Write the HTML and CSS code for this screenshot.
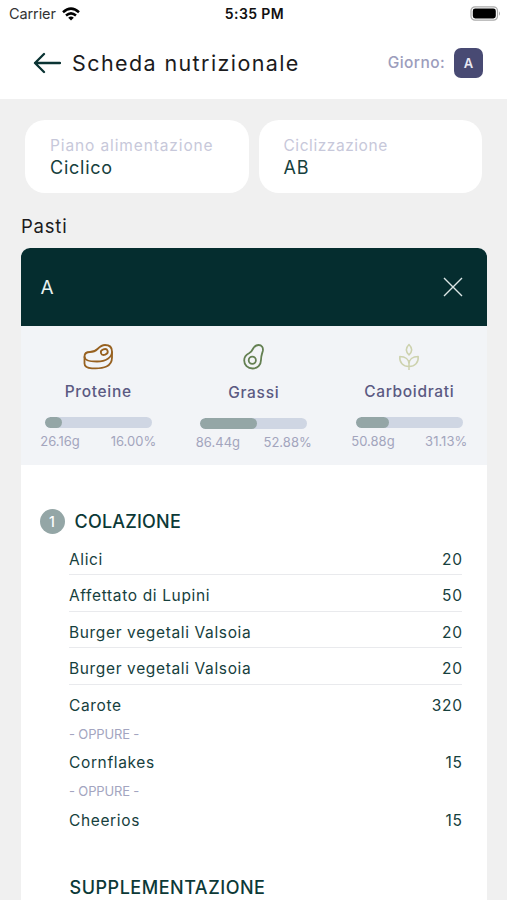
FILE: index.html
```html
<!DOCTYPE html>
<html lang="it">
<head>
<meta charset="utf-8">
<title>Scheda nutrizionale</title>
<link rel="stylesheet" href="styles.css">
</head>
<body>
<header class="top">
  <div class="status">
    <div class="carrier"><span>Carrier</span>
      <svg class="wifi" width="18" height="14" viewBox="0 0 18 14" fill="none" stroke="#000" stroke-width="2.5"><path d="M1 5.2Q9 -2 17 5.2M4 8.5Q9 4.2 14 8.5"/><path d="M6.2 10.7Q9 8.5 11.8 10.7L9 13.5Z" fill="#000" stroke="none"/></svg>
    </div>
    <span class="clock">5:35 PM</span>
    <svg class="battery" width="31" height="15" viewBox="0 0 31 15"><rect x="1" y=".8" width="26.5" height="13.4" rx="4" fill="#fff" stroke="#aaa" stroke-width="1.2"/><rect x="2.8" y="2.6" width="23" height="9.8" rx="2.4" fill="#000"/><path d="M29 5.2Q31 7.5 29 9.8Z" fill="#aaa"/></svg>
  </div>
  <div class="nav">
    <svg class="back" width="28" height="22" viewBox="0 0 28 22" fill="none" stroke="#0b3434" stroke-width="2.3" stroke-linecap="round" stroke-linejoin="round"><path d="M27 11H2M11 2L2 11l9 9"/></svg>
    <h1>Scheda nutrizionale</h1>
    <span class="day-label">Giorno:</span>
    <span class="day">A</span>
  </div>
</header>
<main>
  <section class="plans">
    <div class="plan"><span class="label wide">Piano alimentazione</span><span class="value">Ciclico</span></div>
    <div class="plan"><span class="label">Ciclizzazione</span><span class="value">AB</span></div>
  </section>
  <h2>Pasti</h2>
  <section class="card">
    <div class="card-head"><span>A</span>
      <svg width="20" height="20" viewBox="0 0 20 20" fill="none" stroke="#dce6e6" stroke-width="1.4"><path d="M1 1l18 18M19 1L1 19"/></svg>
    </div>
    <div class="macros">
      <div class="macro">
        <svg width="32" height="28" viewBox="0 0 32 28" fill="none" stroke="#976120" stroke-width="1.8" stroke-linejoin="round"><path d="M2.500 13.500C2.500 10.500 4.500 9 8 9C11 9 13 8.500 15.500 6C18 3.500 19.500 2 23 2C27.500 2 30 4.500 30 8.500C30 14.500 24 18.500 15 18.500C7 18.500 2.500 17.500 2.500 13.500Z"/><path d="M2.500 13.500V20.500C2.500 24 5 25 10 25.300C22 26 30 23.500 30 14.500V8.500"/><ellipse cx="22.300" cy="9" rx="3.500" ry="2.800" transform="rotate(-20 22.300 9)"/></svg>
        <h3>Proteine</h3><div class="bar"><i class="p16"></i></div>
        <div class="nums"><span>26.16g</span><span>16.00%</span></div>
      </div>
      <div class="macro mid">
        <svg width="24" height="28" viewBox="0 0 24 28" fill="none" stroke="#648052" stroke-width="1.8"><path d="M16.500 2C19.800 2 21.500 4.500 20.800 8C20 11 19 12.500 19 17C19 22 15.500 25.500 10.700 25.500C5.500 25.500 2.200 22 2.200 17.500C2.200 14 4.500 11.500 7 10.300C9.500 9 10.500 7 11.500 5C12.500 3.200 14 2 16.500 2Z"/><circle cx="10.300" cy="17.300" r="3.600"/></svg>
        <h3>Grassi</h3><div class="bar"><i class="p53"></i></div>
        <div class="nums"><span>86.44g</span><span>52.88%</span></div>
      </div>
      <div class="macro">
        <svg width="22" height="28" viewBox="0 0 22 28" fill="none" stroke="#cdd2ae" stroke-width="1.500" stroke-linejoin="round"><path d="M11 1.500C7.500 5 7.500 8.500 11 12C14.500 8.500 14.500 5 11 1.500ZM11 27V21C11 16.500 7.500 13.500 1.800 13.500C1.300 19.500 5 23.500 11 23.500C17 23.500 20.700 19.500 20.200 13.500C14.500 13.500 11 16.500 11 21"/></svg>
        <h3>Carboidrati</h3><div class="bar"><i class="p31"></i></div>
        <div class="nums"><span>50.88g</span><span>31.13%</span></div>
      </div>
    </div>
    <div class="meal">
      <div class="meal-title"><span class="num">1</span><h4>COLAZIONE</h4></div>
      <ul>
        <li><span>Alici</span><b>20</b></li>
        <li class="line"><span>Affettato di Lupini</span><b>50</b></li>
        <li class="line"><span>Burger vegetali Valsoia</span><b>20</b></li>
        <li class="line"><span>Burger vegetali Valsoia</span><b>20</b></li>
        <li class="line"><span>Carote</span><b>320</b></li>
        <li class="or">- OPPURE -</li>
        <li class="alt"><span>Cornflakes</span><b>15</b></li>
        <li class="or">- OPPURE -</li>
        <li class="alt"><span>Cheerios</span><b>15</b></li>
      </ul>
      <h4 class="supp">SUPPLEMENTAZIONE</h4>
    </div>
  </section>
</main>
</body>
</html>
```
FILE: styles.css
```css
* { box-sizing: border-box; }
body { margin: 0; height: 900px; overflow: hidden; background: #f0f0f0; color: #1b1b1d; font-family: Inter, "Liberation Sans", sans-serif; }
h1, h2, h3, h4, ul { margin: 0; padding: 0; font-weight: 400; list-style: none; }
svg { display: block; flex: none; }
main { height: 801px; overflow: hidden; }
.top { height: 99px; background: #fff; }
.status { height: 26px; display: grid; grid-template-columns: 1fr auto 1fr; align-items: center; padding: 0 6px 0 9px; }
.carrier { display: flex; align-items: center; gap: 6px; font-size: 14.5px; letter-spacing: -.1px; color: #333; line-height: 26px; padding-top: 1px; }
.wifi { margin-top: -1px; }
.clock { font-size: 14px; font-weight: 600; letter-spacing: .4px; color: #111; margin-left: -1px; }
.battery { justify-self: end; }
.nav { height: 73px; display: flex; align-items: center; padding: 0 24px 0 33px; }
h1 { margin: 0 0 0 11px; flex: 1; font-size: 21.5px; letter-spacing: 1.4px; white-space: nowrap; }
.day-label { color: #9c9dbc; font-size: 15.5px; letter-spacing: .4px; font-weight: 500; }
.day { margin-left: 9px; width: 29px; height: 30px; border-radius: 7px; background: #484a73; color: #e8e8f2; display: grid; place-items: center; font-size: 13px; font-weight: 600; }
.plans { display: grid; grid-template-columns: 224px 223.5px; gap: 9.5px; padding: 20.5px 25px 0; }
.plan { height: 73.5px; border-radius: 20px; background: #fff; padding: 15px 25px; display: flex; flex-direction: column; }
.label { color: #c7c8da; font-size: 15.5px; line-height: 22px; letter-spacing: .55px; white-space: nowrap; }
.wide { letter-spacing: .88px; }
.value { color: #16403d; font-size: 18px; line-height: 22px; letter-spacing: .75px; }
h2 { margin: 22px 0 0 21px; font-size: 18.5px; line-height: 22px; letter-spacing: .8px; }
.card { margin: 11px 20px 0 20.5px; height: 700px; background: #fff; border-radius: 9px 9px 0 0; overflow: hidden; }
.card-head { height: 78px; background: #052d2f; color: #e9f0f0; display: flex; align-items: center; justify-content: space-between; padding: 0 24px 0 20px; font-size: 19px; }
.macros { height: 139px; background: #f2f4f7; display: grid; grid-template-columns: repeat(3, 1fr); padding-top: 17px; }
.macro { display: flex; flex-direction: column; align-items: center; }
h3 { margin-top: 10px; color: #5b5a82; font-size: 15.5px; line-height: 22px; font-weight: 500; letter-spacing: .68px; }
.bar { margin-top: 13.5px; width: 107px; height: 11px; border-radius: 6px; background: #cfd6e3; overflow: hidden; }
.bar i { display: block; height: 11px; border-radius: 6px; background: #94a6a6; }
.p16 { width: 16%; }
.p53 { width: 52.88%; }
.p31 { width: 31.13%; }
.mid h3 { margin-top: 11px; }
.nums { margin-top: 4px; width: 116px; display: flex; justify-content: space-between; color: #a3a5bd; font-size: 13px; letter-spacing: .02px; line-height: 18px; }
.meal { padding: 44px 25px 0 19px; color: #16403d; }
.meal-title { display: flex; align-items: center; gap: 10px; height: 25px; }
.num { width: 25px; height: 25px; border-radius: 50%; background: #94a6a6; color: #fff; display: grid; place-items: center; font-size: 14px; font-weight: 500; }
h4 { color: #0c3937; font-size: 18px; font-weight: 500; letter-spacing: .2px; }
ul { margin: 6px 0 0 29.5px; font-size: 15.5px; letter-spacing: .64px; }
li { height: 34px; display: flex; justify-content: space-between; line-height: 39.5px; }
.line { height: 36.7px; border-top: 1.5px solid #e9eaed; line-height: 42px; }
b { font-weight: 400; margin-right: -.6px; }
.or { height: 20.6px; line-height: 27px; color: #a3a5c0; font-size: 13px; letter-spacing: -.15px; }
.alt { height: 36.7px; line-height: 44px; }
.supp { margin: 41px 0 0 30px; line-height: 24px; letter-spacing: .52px; }
```
